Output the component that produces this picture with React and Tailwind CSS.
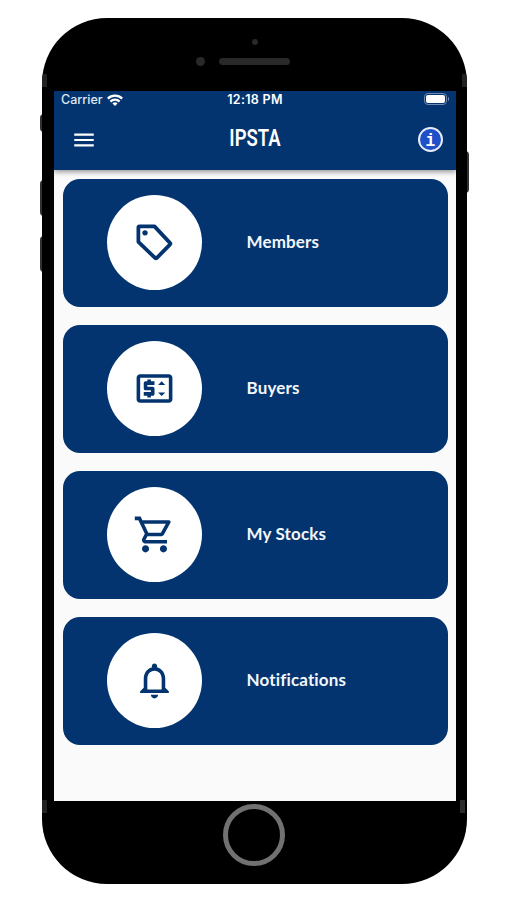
import React from "react";
import {
  MdMenu,
  MdOutlinePriceChange,
  MdOutlineShoppingCart,
  MdNotificationsNone,
} from "react-icons/md";

function TagIcon({ className }) {
  return (
    <svg viewBox="0 0 24 24" className={className} fill="none" stroke="currentColor" strokeWidth="2.1" strokeLinejoin="round">
      <path d="M3.6 3H12l8.6 9.2q.5.5 0 1l-7.3 7.4q-.5.5-1 0L3 11.6v-8q0-.6.6-.6z" />
      <circle cx="6.7" cy="6.6" r="1.5" fill="currentColor" stroke="none" />
    </svg>
  );
}

const menuItems = [
  { label: "Members", icon: TagIcon },
  { label: "Buyers", icon: MdOutlinePriceChange },
  { label: "My Stocks", icon: MdOutlineShoppingCart },
  { label: "Notifications", icon: MdNotificationsNone },
];

function WifiIcon() {
  return (
    <svg viewBox="0 0 16 12" className="-mt-px ml-1 h-3 w-4" fill="none" stroke="white" strokeWidth="2.3">
      <path d="M0.8 4.6a10.2 10.2 0 0 1 14.4 0" />
      <path d="M3.4 7.6a6.5 6.5 0 0 1 9.2 0" />
      <path d="M8 12 5.5 9.5a3.5 3.5 0 0 1 5 0z" fill="white" stroke="none" />
    </svg>
  );
}

function Battery() {
  return (
    <div className="flex items-center">
      <div className="h-3 w-[23px] rounded-[4px] border border-[#6d8bb3] p-px">
        <div className="h-full w-full rounded-[2px] bg-white" />
      </div>
      <div className="ml-px h-1 w-px rounded-r bg-[#6d8bb3]" />
    </div>
  );
}

function StatusBar() {
  return (
    <div className="grid h-[17px] grid-cols-3 items-center pl-[7px] pr-[7px] font-['Inter',sans-serif] text-[12.5px] leading-none text-white">
      <div className="flex items-center pt-px text-[#dfe7f1]">
        <span className="font-medium">Carrier</span>
        <WifiIcon />
      </div>
      <span className="whitespace-nowrap pt-[2px] text-center font-semibold tracking-[0.3px]">12:18 PM</span>
      <div className="-mt-px flex justify-end">
        <Battery />
      </div>
    </div>
  );
}

function Header() {
  return (
    <header className="relative h-[79px] shrink-0 bg-[#03346f] shadow-[0_2px_5px_rgba(0,0,0,0.4)]">
      <StatusBar />
      <div className="grid h-[62px] grid-cols-3 items-center pl-[17px] pr-[13px]">
        <MdMenu className="mt-px h-[26px] w-[26px] text-white" />
        <h1 className="-ml-[4px] -mt-[2px] scale-x-[0.77] whitespace-nowrap text-center font-['Roboto',sans-serif] text-[24px] font-semibold leading-none text-white">
          IPSTA
        </h1>
        <div className="flex h-[25px] w-[25px] items-center justify-center justify-self-end rounded-full border-2 border-[#e6ebf7] bg-[#1e50c8] font-['Liberation_Mono',monospace] text-[18px] font-bold leading-none text-white">
          <span className="mt-[3px] scale-x-90">i</span>
        </div>
      </div>
    </header>
  );
}

function MenuCard({ label, icon: Icon }) {
  return (
    <button className="flex h-[128.5px] w-full items-center rounded-[17px] bg-[#03346f] pl-[44.5px] text-left">
      <span className="flex h-[95px] w-[95px] items-center justify-center rounded-full bg-white text-[#03346f]">
        <Icon className="h-[43px] w-[43px]" />
      </span>
      <span className="-mt-[2px] ml-[44.5px] font-['Lato',sans-serif] text-[17px] font-bold leading-none tracking-[0.15px] text-[#f3f6fa]">
        {label}
      </span>
    </button>
  );
}

export default function App() {
  return (
    <div className="flex h-[900px] w-[507px] flex-col bg-white pl-[42px] pt-[17.5px]">
      <div className="relative h-[866px] w-[424.5px]">
        {/* side buttons */}
        <div className="absolute -left-[2px] top-[96px] h-[18px] w-1 rounded-l bg-[#303030]" />
        <div className="absolute -left-[2px] top-[162px] h-[36px] w-1 rounded-l bg-[#303030]" />
        <div className="absolute -left-[2px] top-[218px] h-[36px] w-1 rounded-l bg-[#303030]" />
        <div className="absolute -right-[2px] top-[133px] h-[42px] w-1 rounded-r bg-[#303030]" />

        <div className="relative flex h-full w-full flex-col overflow-hidden rounded-[65px] bg-black">
          {/* antenna bands */}
          <div className="absolute left-0 top-[56px] h-[13px] w-[5px] bg-[#222]" />
          <div className="absolute right-0 top-[56px] h-[13px] w-[5px] bg-[#222]" />
          <div className="absolute left-0 top-[782px] h-[13px] w-[5px] bg-[#222]" />
          <div className="absolute right-[2px] top-[782px] h-[13px] w-[5px] bg-[#2c2c2c]" />

          <div className="flex h-[73.5px] shrink-0 flex-col items-center pl-px pt-[21.5px]">
            <div className="h-[6px] w-[6px] rounded-full bg-[#292929]" />
            <div className="mr-[55px] mt-[12px] flex items-center gap-[14px]">
              <div className="h-[9px] w-[9px] rounded-full bg-[#292929]" />
              <div className="-mr-[32px] h-[7px] w-[71px] rounded-full bg-[#292929]" />
            </div>
          </div>

          <div className="ml-3 flex h-[709.5px] w-[402px] shrink-0 flex-col bg-[#fafafa]">
            <Header />
            <main className="flex flex-col gap-[17.5px] px-[8.5px] pt-[8.5px]">
              {menuItems.map((item) => (
                <MenuCard key={item.label} {...item} />
              ))}
            </main>
          </div>

          <div className="flex justify-center pt-[3px]">
            <div className="h-[62px] w-[62px] rounded-full border-[5px] border-[#717171]" />
          </div>
        </div>
      </div>
    </div>
  );
}
